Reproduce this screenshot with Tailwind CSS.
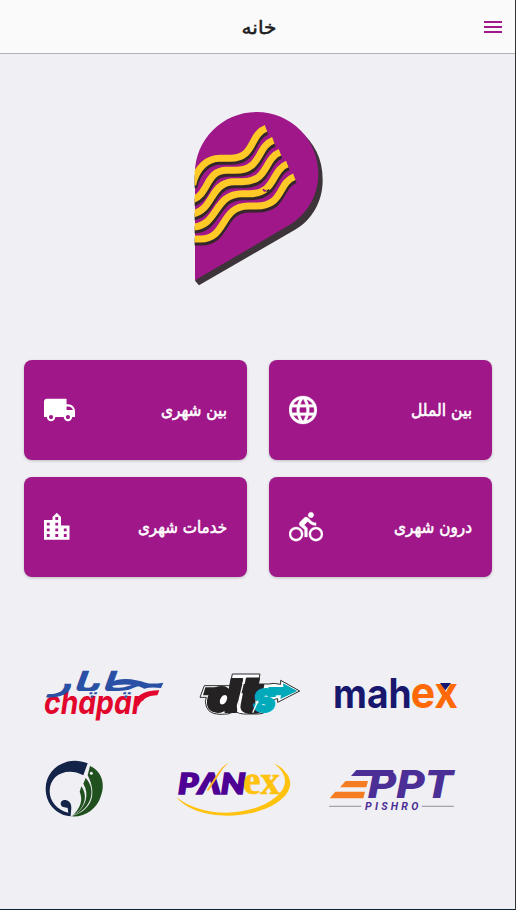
<!DOCTYPE html>
<html lang="fa">
<head>
<meta charset="utf-8">
<title>خانه</title>
<script src="https://cdn.jsdelivr.net/npm/@tailwindcss/browser@4"></script>
</head>
<body class="bg-[#efeff4]">
<div class="w-[516px] h-[910px] flex flex-col border-r border-b border-r-[#333538] border-b-[#0c2036] overflow-hidden font-['DejaVu_Sans',sans-serif]">
  <header class="h-[54px] shrink-0 bg-[#fafafa] border-b border-[#b2b2b7] grid grid-cols-3 items-center pr-[10px] pl-[10px]">
    <span></span>
    <svg class="justify-self-center" width="60" height="40" viewBox="0 0 60 40"><text x="31" y="27" text-anchor="middle" direction="rtl" font-size="19" fill="#1d1d1f" stroke="#1d1d1f" stroke-width="0.500" textLength="35" lengthAdjust="spacingAndGlyphs">خانه</text></svg>
    <svg class="justify-self-end" width="24" height="24" viewBox="0 0 24 24" fill="#a01789"><path d="M3 6h18v2H3zM3 11h18v2H3zM3 16h18v2H3z"/></svg>
  </header>
  <main class="flex flex-col">
    <svg class="mt-[46px] ml-[180px]" width="160" height="200" viewBox="0 0 480 600">
      <path fill="#3c3438" d="M45 542L57 556L345 389C395 360 428 306 428 240C428 175 402 128 360 93Z"/>
      <path fill="#a01789" d="M45 541V220C45 118 128 36 230 36C332 36 415 118 415 220C415 289 380 345 327 376Z"/>
      <clipPath id="pin"><rect x="44" y="0" width="436" height="600"/></clipPath>
      <g clip-path="url(#pin)" fill="none" stroke-width="21">
        <g stroke="#33272c" transform="translate(3 9)">
          <path d="M38 254C50 202 82 175 120 175H150C226 175 208 104 258 85"/>
          <path d="M36 300C88 284 76 211 140 211H165C247 211 229 140 280 121"/>
          <path d="M36 342C102 332 88 245 164 245H186C268 245 250 176 300 157"/>
          <path d="M36 381C115 381 100 281 186 281H208C290 281 272 211 322 192"/>
          <path d="M36 417H62C140 417 120 318 205 318H229C311 318 293 249 343 230"/>
        </g>
        <g stroke="#ffc927">
          <path d="M38 254C50 202 82 175 120 175H150C226 175 208 104 258 85"/>
          <path d="M36 300C88 284 76 211 140 211H165C247 211 229 140 280 121"/>
          <path d="M36 342C102 332 88 245 164 245H186C268 245 250 176 300 157"/>
          <path d="M36 381C115 381 100 281 186 281H208C290 281 272 211 322 192"/>
          <path d="M36 417H62C140 417 120 318 205 318H229C311 318 293 249 343 230"/>
        </g>
      </g>
      <path fill="#a01789" d="M247 268l5-2 2 4 4-1 1 4-5 3-4-3z"/>
      <path fill="#33272c" d="M258 273l8-6 4 4-9 6z"/>
    </svg>

    <section class="mt-[60px] mx-6 w-[468px] grid grid-cols-2 gap-x-[22px] gap-y-[17px]">
      <a class="h-[100px] rounded-lg bg-[#a01789] shadow-[0_1px_3px_rgba(0,0,0,0.2)] flex items-center justify-between pl-5 pr-3">
        <svg width="31" height="34" viewBox="1 0 22 24" fill="#fff"><path fill-rule="evenodd" d="M3 4h14v4h1c2.800 0 5 2 5 5v4h-2a3 3 0 0 1-6 0H9a3 3 0 0 1-6 0H1V6c0-1.100.9-2 2-2zm3 11.500a1.500 1.500 0 1 0 0 3 1.500 1.500 0 0 0 0-3zm12 0a1.500 1.500 0 1 0 0 3 1.500 1.500 0 0 0 0-3zM17 9.500V12h4.500c-.4-1.500-1.700-2.500-3.500-2.500z"/></svg>
        <svg width="100" height="40" viewBox="0 0 100 40"><text x="92" y="26" direction="rtl" font-size="17" fill="#fff" stroke="#fff" stroke-width="0.600" textLength="66" lengthAdjust="spacingAndGlyphs">بین شهری</text></svg>
      </a>
      <a class="h-[100px] rounded-lg bg-[#a01789] shadow-[0_1px_3px_rgba(0,0,0,0.2)] flex items-center justify-between pl-5 pr-3">
        <svg width="28" height="34" viewBox="2 0 20 24" fill="#fff"><path d="M11.990 2C6.470 2 2 6.480 2 12s4.470 10 9.990 10C17.520 22 22 17.520 22 12S17.520 2 11.990 2zm6.930 6h-2.950c-.32-1.250-.78-2.450-1.380-3.560 1.840.63 3.370 1.910 4.330 3.560zM12 4.040c.83 1.200 1.480 2.530 1.910 3.960h-3.820c.43-1.430 1.080-2.760 1.910-3.960zM4.260 14C4.100 13.360 4 12.690 4 12s.1-1.360.26-2h3.380c-.08.66-.14 1.320-.14 2s.06 1.340.14 2H4.260zm.82 2h2.950c.32 1.250.78 2.450 1.380 3.560-1.840-.63-3.370-1.900-4.330-3.560zm2.950-8H5.080c.96-1.660 2.490-2.930 4.330-3.560C8.810 5.550 8.350 6.750 8.030 8zM12 19.960c-.83-1.200-1.480-2.530-1.910-3.960h3.820c-.43 1.430-1.080 2.760-1.910 3.960zM14.340 14H9.660c-.09-.66-.16-1.320-.16-2s.07-1.350.16-2h4.680c.09.65.16 1.320.16 2s-.07 1.340-.16 2zm.25 5.560c.6-1.110 1.060-2.310 1.380-3.560h2.950c-.96 1.650-2.490 2.930-4.330 3.560zM16.360 14c.08-.66.14-1.320.14-2s-.06-1.340-.14-2h3.380c.16.64.26 1.310.26 2s-.1 1.360-.26 2h-3.380z" stroke="#fff" stroke-width="0.200"/></svg>
        <svg width="100" height="40" viewBox="0 0 100 40"><text x="92" y="26" direction="rtl" font-size="17" fill="#fff" stroke="#fff" stroke-width="0.600" textLength="61" lengthAdjust="spacingAndGlyphs">بین الملل</text></svg>
      </a>
      <a class="h-[100px] rounded-lg bg-[#a01789] shadow-[0_1px_3px_rgba(0,0,0,0.2)] flex items-center justify-between pl-5 pr-3">
        <svg width="25.5" height="34" viewBox="3 0 18 24" fill="#fff"><path d="M15 11V5l-3-3-3 3v2H3v14h18V11h-6zm-8 8H5v-2h2v2zm0-4H5v-2h2v2zm0-4H5V9h2v2zm6 8h-2v-2h2v2zm0-4h-2v-2h2v2zm0-4h-2V9h2v2zm0-4h-2V5h2v2zm6 12h-2v-2h2v2zm0-4h-2v-2h2v2z"/></svg>
        <svg width="130" height="40" viewBox="0 0 130 40"><text x="122" y="26" direction="rtl" font-size="17" fill="#fff" stroke="#fff" stroke-width="0.600" textLength="89" lengthAdjust="spacingAndGlyphs">خدمات شهری</text></svg>
      </a>
      <a class="h-[100px] rounded-lg bg-[#a01789] shadow-[0_1px_3px_rgba(0,0,0,0.2)] flex items-center justify-between pl-5 pr-3">
        <svg width="34" height="34" viewBox="0 0 24 24" fill="#fff"><path stroke="#fff" stroke-width="0.200" d="M15.500 5.500c1.100 0 2-.9 2-2s-.9-2-2-2-2 .9-2 2 .9 2 2 2zM5 12c-2.800 0-5 2.200-5 5s2.200 5 5 5 5-2.200 5-5-2.200-5-5-5zm0 8.500c-1.900 0-3.500-1.600-3.500-3.500s1.600-3.500 3.500-3.500 3.500 1.600 3.500 3.500-1.600 3.500-3.500 3.500zm5.800-10l2.400-2.400.8.8c1.300 1.300 3 2.100 5.100 2.100V9c-1.500 0-2.700-.6-3.600-1.500l-1.900-1.900c-.5-.4-1-.6-1.600-.6s-1.100.2-1.400.6L7.800 8.400c-.4.4-.6.9-.6 1.400 0 .6.2 1.100.6 1.400L11 14v5h2v-6.200l-2.200-2.300zM19 12c-2.800 0-5 2.200-5 5s2.200 5 5 5 5-2.200 5-5-2.200-5-5-5zm0 8.500c-1.900 0-3.500-1.600-3.500-3.500s1.600-3.500 3.500-3.500 3.500 1.600 3.500 3.500-1.600 3.500-3.500 3.500z"/></svg>
        <svg width="120" height="40" viewBox="0 0 120 40"><text x="112" y="26" direction="rtl" font-size="17" fill="#fff" stroke="#fff" stroke-width="0.600" textLength="78" lengthAdjust="spacingAndGlyphs">درون شهری</text></svg>
      </a>
    </section>

    <section class="mt-[83px] ml-[30px] flex items-start">
      <svg width="150" height="70" viewBox="0 0 450 210">
        <text x="42" y="162" font-family="Inter, sans-serif" font-size="98" font-weight="700" font-style="italic" fill="#e3062c" textLength="298" lengthAdjust="spacingAndGlyphs">chapar</text>
        <path fill="#e3062c" d="M312 124Q334 90 388 91L382 106Q343 104 324 140Z"/>
        <text x="338" y="93" direction="rtl" transform="translate(32 0) skewX(-20)" font-size="80" font-weight="700" fill="#2a50a5" textLength="276" lengthAdjust="spacingAndGlyphs">چاپار</text>
        <path fill="#2a50a5" d="M234 72C270 48 315 58 347 68Q365 73 400 68L393 84Q362 80 343 86Q300 65 234 80Z"/>
      </svg>
      <svg class="ml-[10px]" width="120" height="70" viewBox="0 0 360 210">
        <g stroke-linejoin="round">
          <path fill="#fff" stroke="#2b2b2e" stroke-width="3" d="M43 77H120L127 42H210L204 72H235Q252 68 272 73V61L329 93L263 127V116Q248 117 243 132Q232 162 205 162H160Q144 160 136 154Q115 165 90 163Q48 163 46 125L49 112H30Z"/>
          <path fill="#252223" d="M46 82H92L66 106H39Z"/>
          <path fill="#00aaba" d="M279 70L322 93L271 117L273 106H240L235 81H280Z"/>
          <g font-family="Inter, sans-serif" font-weight="900" font-style="italic" font-size="138" stroke-width="6">
            <text x="50" y="155" fill="#252223" stroke="#252223" textLength="102" lengthAdjust="spacingAndGlyphs">d</text>
            <text x="145" y="155" fill="#252223" stroke="#252223" font-size="150" textLength="72" lengthAdjust="spacingAndGlyphs">t</text>
            <text x="191" y="155" fill="#00aaba" stroke="#00aaba" font-size="128" textLength="66" lengthAdjust="spacingAndGlyphs">s</text>
          </g>
          <path fill="none" stroke="#fff" stroke-width="4" d="M165 48L147 122Q136 145 151 158M204 122L188 158"/>
        </g>
      </svg>
      <svg class="ml-[15px] mt-[5px]" width="145" height="60" viewBox="0 0 435 180">
        <text x="24" y="130" font-family="Inter, sans-serif" font-size="122" font-weight="700" fill="#17186d" textLength="236" lengthAdjust="spacingAndGlyphs">mah</text>
        <text x="257" y="130" font-family="Inter, sans-serif" font-size="134" font-weight="700" fill="#ff6907" textLength="142" lengthAdjust="spacingAndGlyphs">ex</text>
        <path fill="#17186d" d="M345 54H378L361 76Z"/>
      </svg>
    </section>
    <section class="mt-5 ml-[30px] flex items-start">
      <svg width="90" height="80" viewBox="0 0 270 240">
        <path fill="#142348" d="M173 40C111 14 47 56 47 116C47 165 84 196 122 199L124 173C124 158 116 150 102 150C91 151 89 165 97 170L113 174L115 188C80 180 59 153 59 123C59 76 109 49 160 76Z"/>
        <path fill="#21501f" d="M180 48C216 64 227 103 212 140C200 177 164 203 123 199C180 184 205 139 173 76Z"/>
        <path fill="#21501f" d="M167 84C201 120 184 176 130 197C169 172 179 133 160 101ZM154 109C176 140 163 178 126 198C151 175 160 151 149 125Z"/>
        <circle cx="184" cy="70" r="4.500" fill="#efeff4"/>
      </svg>
      <svg class="ml-[45px]" width="140" height="80" viewBox="0 0 420 240">
        <path fill="#ffc20f" d="M34 141C72 191 172 208 255 190C349 171 405 111 360 65Q348 49 328 42C376 78 372 124 302 161C225 201 103 198 34 141Z"/>
        <text x="39" y="131" font-family="Lato, sans-serif" font-size="88" font-weight="900" font-style="italic" fill="#4e0095" stroke="#4e0095" stroke-width="5" textLength="203" lengthAdjust="spacingAndGlyphs">PΛN</text>
        <path fill="#ffb91a" d="M190 38Q171 55 159 79L130 123L125 121L152 79Q169 50 190 38Z"/>
        <text x="235" y="131" font-family="Liberation Serif, serif" font-size="118" font-weight="700" fill="#ffc20f" stroke="#ffc20f" stroke-width="2" textLength="110" lengthAdjust="spacingAndGlyphs">ex</text>
      </svg>
      <svg class="ml-[15px] mt-[5px]" width="140" height="70" viewBox="0 0 420 210">
        <path fill="#4b2e96" d="M109 45H220V63H93Z"/>
        <path fill="#f57c20" d="M77 78H144L139 97H60ZM46 110H135L130 130H29Z"/>
        <g fill="#4b2e96" font-family="Roboto, sans-serif" font-weight="900" font-style="italic">
          <text x="144" y="129" font-size="118" textLength="254" lengthAdjust="spacingAndGlyphs">PPT</text>
          <text x="135" y="165" font-size="32" font-weight="700" textLength="160">PISHRO</text>
        </g>
        <path stroke="#a3a3a9" stroke-width="4" d="M27 154H124M305 154H402"/>
      </svg>
    </section>
  </main>
</div>
</body>
</html>
